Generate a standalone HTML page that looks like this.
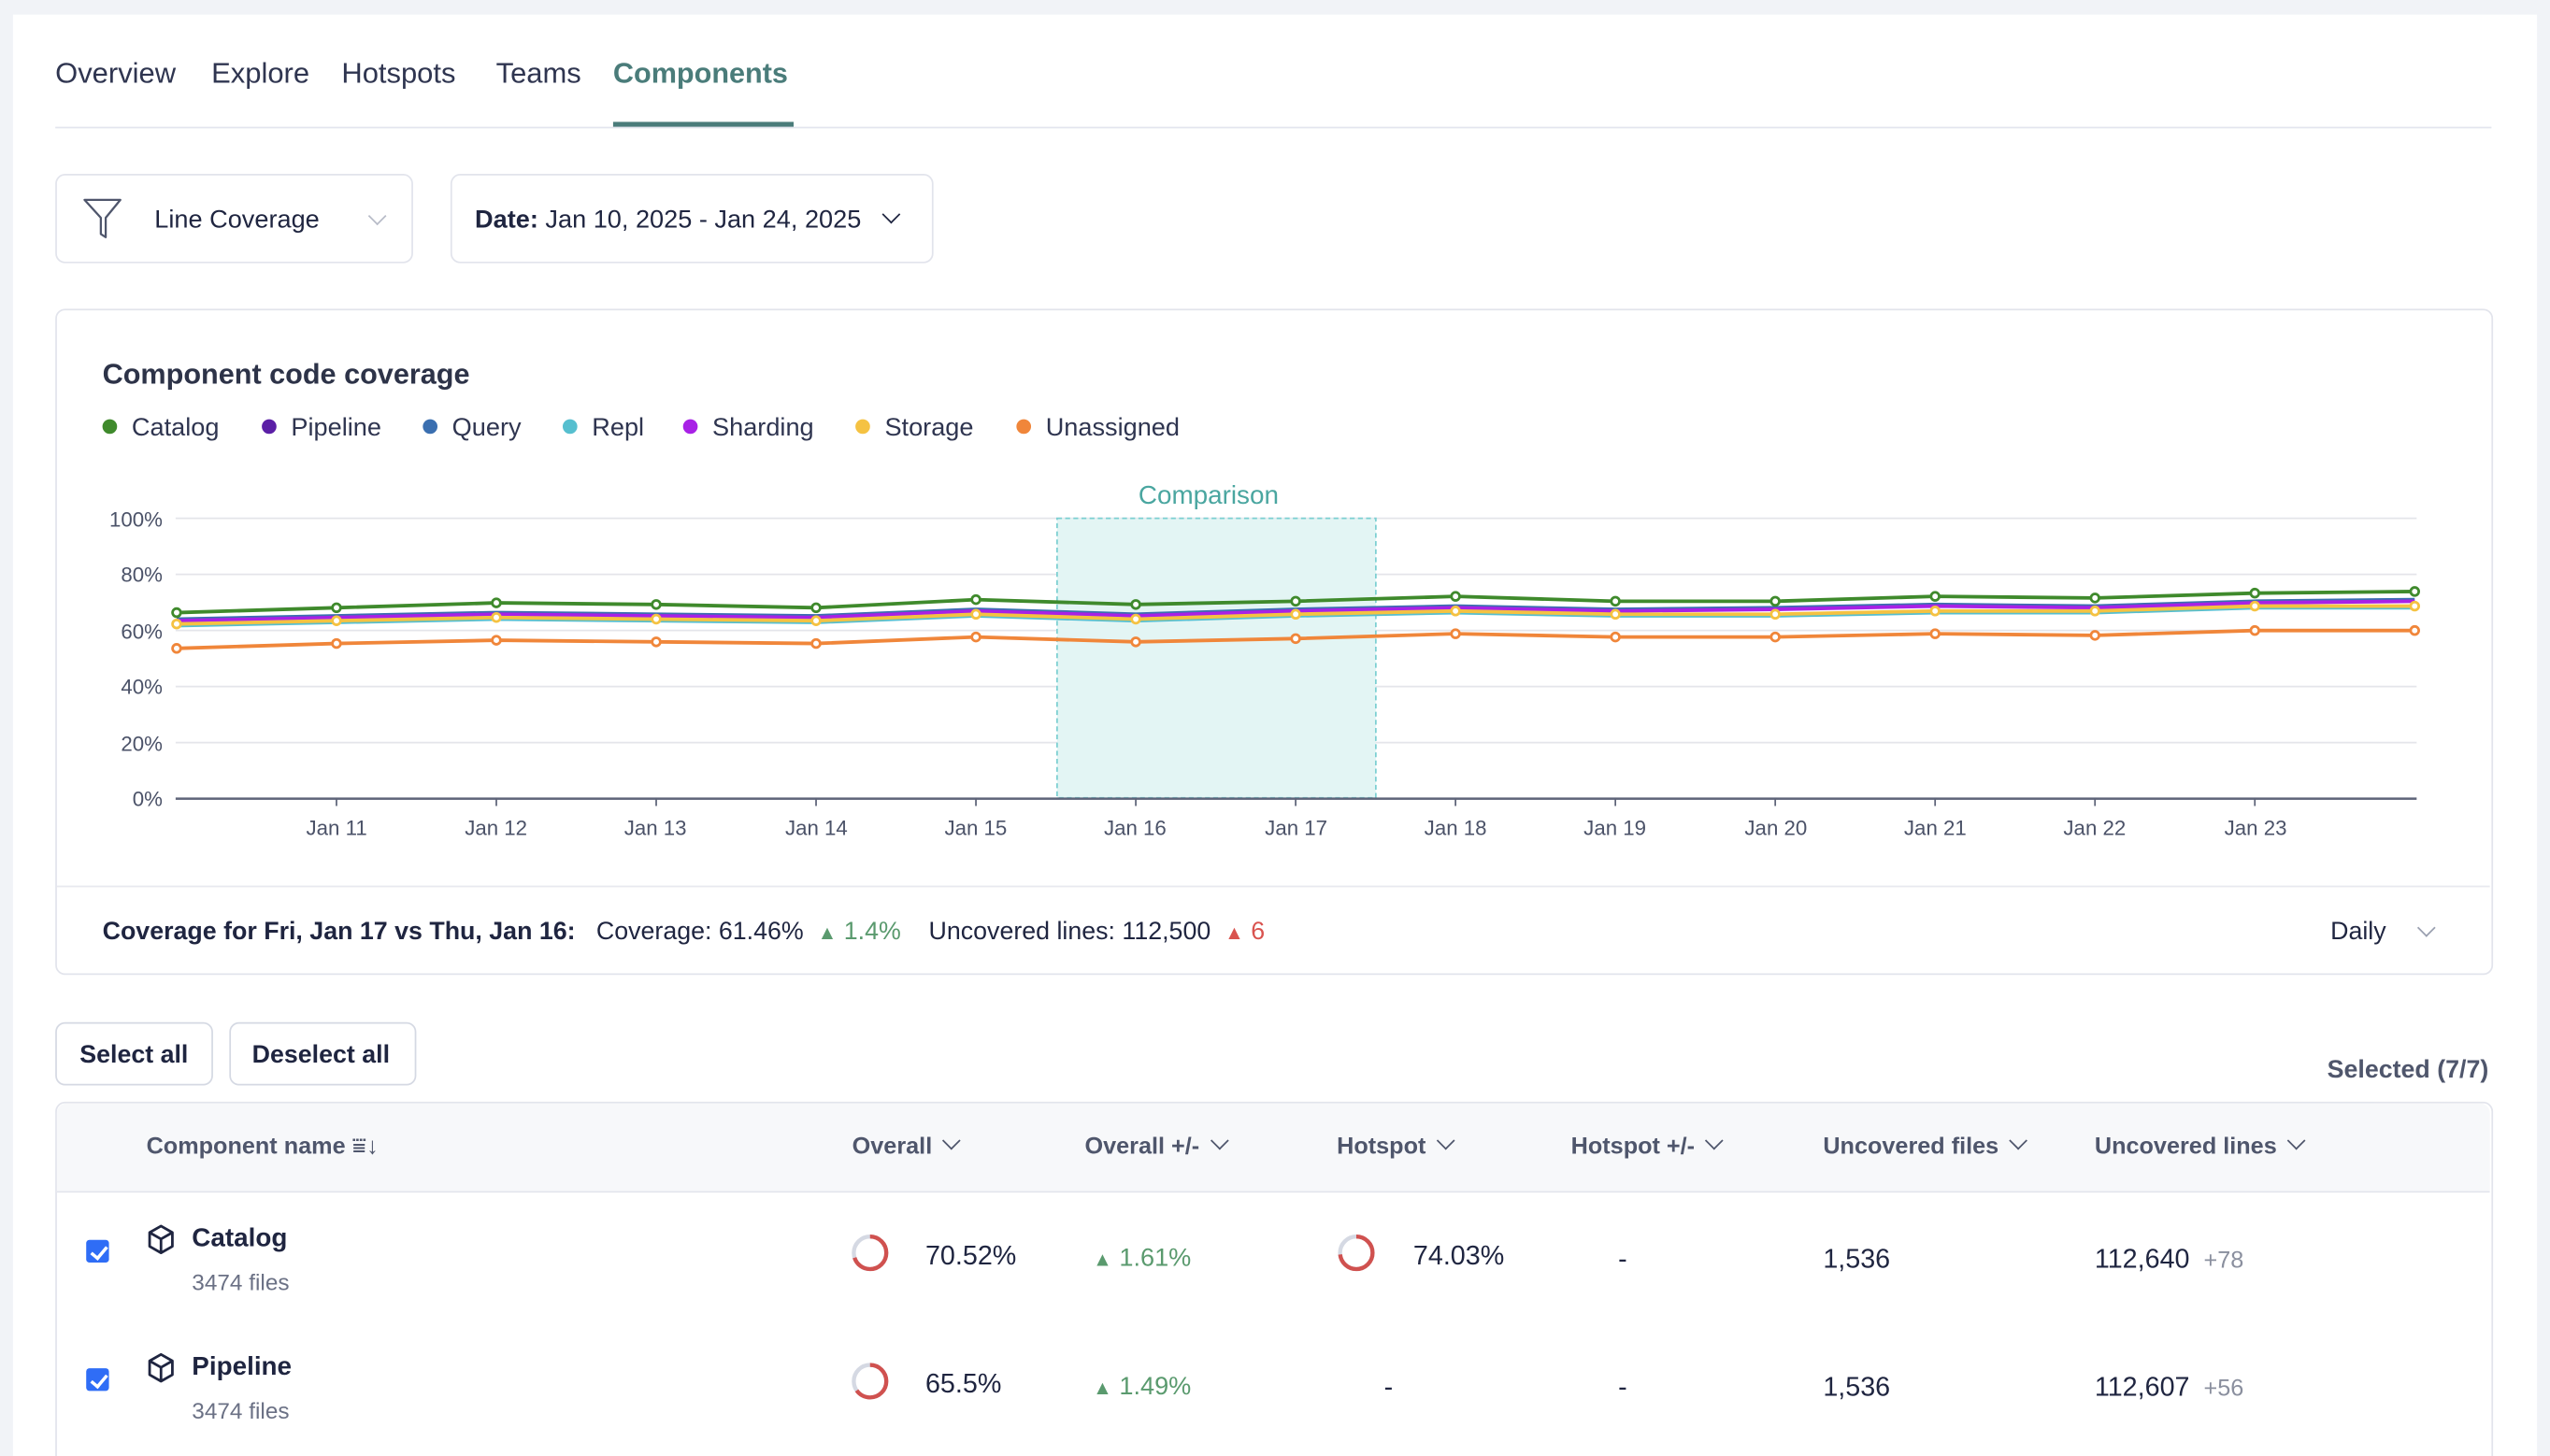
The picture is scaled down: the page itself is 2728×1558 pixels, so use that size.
<!DOCTYPE html>
<html><head><meta charset="utf-8"><style>
html,body{margin:0;padding:0;background:#f1f3f7;width:2728px;height:1558px;overflow:hidden}
#w{position:absolute;left:0;top:0;width:1568px;height:896px;overflow:hidden;transform:scale(1.7398,1.7388);transform-origin:0 0;font-family:"Liberation Sans",sans-serif;color:#1f2540}
.a{position:absolute;white-space:nowrap}
.panel{position:absolute;left:8px;top:9px;width:1552px;height:887px;background:#fff}
.tab{font-size:17.8px;color:#2f3550;top:34px}
.box{position:absolute;border:1px solid #e2e4ec;border-radius:6px;background:#fff}
.leg{font-size:15.6px;color:#2f3550;top:254px}
.dot{display:inline-block;width:9px;height:9px;border-radius:50%;margin-right:9px;vertical-align:1px}
.yl{font-size:12.8px;color:#4b5268;width:50px;text-align:right;left:50px}
.xl{font-size:12.8px;color:#4b5268;top:502px;width:60px;text-align:center}
.th{font-size:14.5px;color:#4f566c;top:698px;font-weight:bold}
.chev{display:inline-block;width:7px;height:7px;border-right:1.5px solid #4f566c;border-bottom:1.5px solid #4f566c;transform:rotate(45deg);margin-left:8px;vertical-align:4px}
.td{font-size:16.5px;color:#1f2540}
.cb{position:absolute;width:14px;height:14px;background:#2f6df6;border-radius:2px}
.cb:after{content:"";position:absolute;left:4.5px;top:1.5px;width:4px;height:8px;border-right:2px solid #fff;border-bottom:2px solid #fff;transform:rotate(40deg)}
.tri{font-size:12px}
</style></head><body><div id="w">
<div class="panel"></div>
<div class="a tab" style="left:34px;top:35px">Overview</div>
<div class="a tab" style="left:130px;top:35px">Explore</div>
<div class="a tab" style="left:210px;top:35px">Hotspots</div>
<div class="a tab" style="left:305px;top:35px">Teams</div>
<div class="a tab" style="left:377px;top:35px;color:#4a7c7a;font-weight:bold;font-size:17.6px">Components</div>
<div class="a" style="left:34px;top:78px;width:1498px;height:1px;background:#e3e5ee"></div>
<div class="a" style="left:377px;top:75px;width:111px;height:3px;background:#4a7c7a"></div>

<div class="box" style="left:34px;top:107px;width:218px;height:53px"></div>
<svg class="a" style="left:50px;top:121px" width="28" height="28" viewBox="0 0 28 28"><path d="M2 2 H24 L15 13 V25 L12 23 V13 Z" fill="none" stroke="#4f566c" stroke-width="1.3" stroke-linejoin="round"/></svg>
<div class="a" style="left:95px;top:127px;font-size:15.6px;color:#1f2540">Line Coverage</div>
<div class="a chev" style="left:220px;top:129px;border-color:#b8bcc8"></div>
<div class="box" style="left:277px;top:107px;width:295px;height:53px"></div>
<div class="a" style="left:292px;top:127px;font-size:15.6px;color:#1f2540"><b>Date:</b> Jan 10, 2025 - Jan 24, 2025</div>
<div class="a chev" style="left:536px;top:128px;border-color:#1f2540"></div>

<div class="box" style="left:34px;top:190px;width:1497px;height:408px"></div>
<div class="a" style="left:63px;top:220px;font-size:17.6px;font-weight:bold;color:#2d3348">Component code coverage</div>
<div class="a leg" style="left:63px;top:255px"><span class="dot" style="background:#3f8a2c"></span>Catalog</div>
<div class="a leg" style="left:161px;top:255px"><span class="dot" style="background:#5b1fa6"></span>Pipeline</div>
<div class="a leg" style="left:260px;top:255px"><span class="dot" style="background:#3a6fb0"></span>Query</div>
<div class="a leg" style="left:346px;top:255px"><span class="dot" style="background:#56bfcf"></span>Repl</div>
<div class="a leg" style="left:420px;top:255px"><span class="dot" style="background:#a821e6"></span>Sharding</div>
<div class="a leg" style="left:526px;top:255px"><span class="dot" style="background:#f5c242"></span>Storage</div>
<div class="a leg" style="left:625px;top:255px"><span class="dot" style="background:#f0863a"></span>Unassigned</div>

<div class="a yl" style="top:312px">100%</div>
<div class="a yl" style="top:346px">80%</div>
<div class="a yl" style="top:381px">60%</div>
<div class="a yl" style="top:415px">40%</div>
<div class="a yl" style="top:450px">20%</div>
<div class="a yl" style="top:484px">0%</div>
<div class="a" style="left:700px;top:297px;font-size:16px;color:#4aa6a0">Comparison</div>
<svg class="a" style="left:0;top:0" width="1568" height="540">
<g stroke="#e4e5ea" stroke-width="1"><line x1="108" y1="319" x2="1486" y2="319"/><line x1="108" y1="353.5" x2="1486" y2="353.5"/><line x1="108" y1="388" x2="1486" y2="388"/><line x1="108" y1="422.5" x2="1486" y2="422.5"/><line x1="108" y1="457" x2="1486" y2="457"/></g>
<rect x="650" y="319" width="196" height="172" fill="#e3f5f4" stroke="#7ccfd2" stroke-dasharray="3,2"/>
<line x1="108" y1="491.5" x2="1486" y2="491.5" stroke="#5d6378" stroke-width="1.5"/>
<g stroke="#5d6378"><line x1="206.9" y1="491" x2="206.9" y2="496"/><line x1="305.2" y1="491" x2="305.2" y2="496"/><line x1="403.5" y1="491" x2="403.5" y2="496"/><line x1="501.8" y1="491" x2="501.8" y2="496"/><line x1="600.1" y1="491" x2="600.1" y2="496"/><line x1="698.4" y1="491" x2="698.4" y2="496"/><line x1="796.7" y1="491" x2="796.7" y2="496"/><line x1="895" y1="491" x2="895" y2="496"/><line x1="993.3" y1="491" x2="993.3" y2="496"/><line x1="1091.6" y1="491" x2="1091.6" y2="496"/><line x1="1189.9" y1="491" x2="1189.9" y2="496"/><line x1="1288.2" y1="491" x2="1288.2" y2="496"/><line x1="1386.5" y1="491" x2="1386.5" y2="496"/></g>
<g fill="none" stroke-width="2.2" stroke-linejoin="round">
<polyline stroke="#56bfcf" points="108.6,385 206.9,383 305.2,381 403.5,382 501.8,383 600.1,379 698.4,382 796.7,379 895,377 993.3,379 1091.6,379 1189.9,377 1288.2,377 1386.5,374 1484.8,374"/>
<polyline stroke="#3a6fb0" points="108.6,381 206.9,379 305.2,377 403.5,378 501.8,379 600.1,375 698.4,378 796.7,375 895,373 993.3,375 1091.6,374 1189.9,372 1288.2,373 1386.5,370 1484.8,369"/>
<polyline stroke="#a821e6" points="108.6,382 206.9,380 305.2,378 403.5,379 501.8,380 600.1,376 698.4,379 796.7,376 895,374 993.3,376 1091.6,375 1189.9,373 1288.2,374 1386.5,371 1484.8,370"/>
<polyline stroke="#f5c242" points="108.6,384 206.9,382 305.2,380 403.5,381 501.8,382 600.1,378 698.4,381 796.7,378 895,376 993.3,378 1091.6,378 1189.9,376 1288.2,376 1386.5,373 1484.8,373"/>
<polyline stroke="#3f8a2c" points="108.6,377 206.9,374 305.2,371 403.5,372 501.8,374 600.1,369 698.4,372 796.7,370 895,367 993.3,370 1091.6,370 1189.9,367 1288.2,368 1386.5,365 1484.8,364"/>
<polyline stroke="#f0863a" points="108.6,399 206.9,396 305.2,394 403.5,395 501.8,396 600.1,392 698.4,395 796.7,393 895,390 993.3,392 1091.6,392 1189.9,390 1288.2,391 1386.5,388 1484.8,388"/>
</g>
<g fill="#fff" stroke-width="1.6">
<g stroke="#f5c242"><circle cx="108.6" cy="384" r="2.5"/><circle cx="206.9" cy="382" r="2.5"/><circle cx="305.2" cy="380" r="2.5"/><circle cx="403.5" cy="381" r="2.5"/><circle cx="501.8" cy="382" r="2.5"/><circle cx="600.1" cy="378" r="2.5"/><circle cx="698.4" cy="381" r="2.5"/><circle cx="796.7" cy="378" r="2.5"/><circle cx="895" cy="376" r="2.5"/><circle cx="993.3" cy="378" r="2.5"/><circle cx="1091.6" cy="378" r="2.5"/><circle cx="1189.9" cy="376" r="2.5"/><circle cx="1288.2" cy="376" r="2.5"/><circle cx="1386.5" cy="373" r="2.5"/><circle cx="1484.8" cy="373" r="2.5"/></g>
<g stroke="#3f8a2c"><circle cx="108.6" cy="377" r="2.5"/><circle cx="206.9" cy="374" r="2.5"/><circle cx="305.2" cy="371" r="2.5"/><circle cx="403.5" cy="372" r="2.5"/><circle cx="501.8" cy="374" r="2.5"/><circle cx="600.1" cy="369" r="2.5"/><circle cx="698.4" cy="372" r="2.5"/><circle cx="796.7" cy="370" r="2.5"/><circle cx="895" cy="367" r="2.5"/><circle cx="993.3" cy="370" r="2.5"/><circle cx="1091.6" cy="370" r="2.5"/><circle cx="1189.9" cy="367" r="2.5"/><circle cx="1288.2" cy="368" r="2.5"/><circle cx="1386.5" cy="365" r="2.5"/><circle cx="1484.8" cy="364" r="2.5"/></g>
<g stroke="#f0863a"><circle cx="108.6" cy="399" r="2.5"/><circle cx="206.9" cy="396" r="2.5"/><circle cx="305.2" cy="394" r="2.5"/><circle cx="403.5" cy="395" r="2.5"/><circle cx="501.8" cy="396" r="2.5"/><circle cx="600.1" cy="392" r="2.5"/><circle cx="698.4" cy="395" r="2.5"/><circle cx="796.7" cy="393" r="2.5"/><circle cx="895" cy="390" r="2.5"/><circle cx="993.3" cy="392" r="2.5"/><circle cx="1091.6" cy="392" r="2.5"/><circle cx="1189.9" cy="390" r="2.5"/><circle cx="1288.2" cy="391" r="2.5"/><circle cx="1386.5" cy="388" r="2.5"/><circle cx="1484.8" cy="388" r="2.5"/></g>
</g>
</svg>
<div class="a xl" style="left:177px">Jan 11</div><div class="a xl" style="left:275px">Jan 12</div><div class="a xl" style="left:373px">Jan 13</div><div class="a xl" style="left:472px">Jan 14</div><div class="a xl" style="left:570px">Jan 15</div><div class="a xl" style="left:668px">Jan 16</div><div class="a xl" style="left:767px">Jan 17</div><div class="a xl" style="left:865px">Jan 18</div><div class="a xl" style="left:963px">Jan 19</div><div class="a xl" style="left:1062px">Jan 20</div><div class="a xl" style="left:1160px">Jan 21</div><div class="a xl" style="left:1258px">Jan 22</div><div class="a xl" style="left:1357px">Jan 23</div>

<div class="a" style="left:35px;top:545px;width:1496px;height:1px;background:#e8e9ef"></div>
<div class="a" style="left:63px;top:565px;font-size:15.4px;color:#1f2540"><b>Coverage for Fri, Jan 17 vs Thu, Jan 16:</b>&nbsp;&nbsp; Coverage: 61.46% &nbsp;<span class="tri" style="color:#5a9a6e">▲</span> <span style="color:#5a9a6e">1.4%</span>&nbsp;&nbsp;&nbsp; Uncovered lines: 112,500 &nbsp;<span class="tri" style="color:#d9534f">▲</span> <span style="color:#d9534f">6</span></div>
<div class="a" style="left:1433px;top:565px;font-size:15.4px;color:#1f2540">Daily</div>
<div class="a chev" style="left:1480px;top:567px;border-color:#9aa0b0"></div>

<div class="box" style="left:34px;top:629px;width:95px;height:37px;border-color:#d5d9e3"></div>
<div class="a" style="left:49px;top:641px;font-size:15.4px;font-weight:bold">Select all</div>
<div class="box" style="left:141px;top:629px;width:113px;height:37px;border-color:#d5d9e3"></div>
<div class="a" style="left:155px;top:641px;font-size:15.4px;font-weight:bold">Deselect all</div>
<div class="a" style="left:1431px;top:650px;font-size:15.4px;font-weight:bold;color:#4f566c">Selected (7/7)</div>

<div class="a" style="left:34px;top:678px;width:1497px;height:230px;border:1px solid #e2e4ec;border-radius:6px 6px 0 0;background:#fff"></div>
<div class="a" style="left:35px;top:679px;width:1496px;height:54px;background:#f7f8fa;border-bottom:1px solid #e2e4ec;border-radius:6px 6px 0 0"></div>
<div class="a th" style="left:90px">Component name <span style="font-weight:normal">⩸↓</span></div>
<div class="a th" style="left:524px">Overall<span class="chev"></span></div>
<div class="a th" style="left:667px">Overall +/-<span class="chev"></span></div>
<div class="a th" style="left:822px">Hotspot<span class="chev"></span></div>
<div class="a th" style="left:966px">Hotspot +/-<span class="chev"></span></div>
<div class="a th" style="left:1121px">Uncovered files<span class="chev"></span></div>
<div class="a th" style="left:1288px">Uncovered lines<span class="chev"></span></div>

<div class="cb" style="left:53px;top:763px"></div>
<svg class="a" style="left:90px;top:753px" width="18" height="20" viewBox="0 0 18 20"><path d="M9 1.5 L16 5.5 V14 L9 18 L2 14 V5.5 Z M2 5.5 L9 9.5 L16 5.5 M9 9.5 V18" fill="none" stroke="#1f2540" stroke-width="1.6" stroke-linejoin="round"/></svg>
<div class="a" style="left:118px;top:754px;font-size:16px;font-weight:bold">Catalog</div>
<div class="a" style="left:118px;top:781px;font-size:14px;color:#6b7185">3474 files</div>
<svg class="a" style="left:523px;top:759px" width="24" height="24"><circle cx="12" cy="12" r="10" fill="none" stroke="#d5d9e3" stroke-width="2.5"/><circle cx="12" cy="12" r="10" fill="none" stroke="#d0514f" stroke-width="2.5" stroke-dasharray="44 62.8" transform="rotate(-90 12 12)"/></svg>
<div class="a td" style="left:569px;top:764px">70.52%</div>
<div class="a" style="left:672px;top:766px;font-size:15.6px;color:#5a9a6e"><span class="tri">▲</span> 1.61%</div>
<svg class="a" style="left:822px;top:759px" width="24" height="24"><circle cx="12" cy="12" r="10" fill="none" stroke="#d5d9e3" stroke-width="2.5"/><circle cx="12" cy="12" r="10" fill="none" stroke="#d0514f" stroke-width="2.5" stroke-dasharray="46 62.8" transform="rotate(-90 12 12)"/></svg>
<div class="a td" style="left:869px;top:764px">74.03%</div>
<div class="a td" style="left:995px;top:766px">-</div>
<div class="a td" style="left:1121px;top:766px">1,536</div>
<div class="a td" style="left:1288px;top:766px">112,640 <span style="font-size:14.5px;color:#8a8f9e">&nbsp;+78</span></div>

<div class="cb" style="left:53px;top:842px"></div>
<svg class="a" style="left:90px;top:832px" width="18" height="20" viewBox="0 0 18 20"><path d="M9 1.5 L16 5.5 V14 L9 18 L2 14 V5.5 Z M2 5.5 L9 9.5 L16 5.5 M9 9.5 V18" fill="none" stroke="#1f2540" stroke-width="1.6" stroke-linejoin="round"/></svg>
<div class="a" style="left:118px;top:833px;font-size:16px;font-weight:bold">Pipeline</div>
<div class="a" style="left:118px;top:860px;font-size:14px;color:#6b7185">3474 files</div>
<svg class="a" style="left:523px;top:838px" width="24" height="24"><circle cx="12" cy="12" r="10" fill="none" stroke="#d5d9e3" stroke-width="2.5"/><circle cx="12" cy="12" r="10" fill="none" stroke="#d0514f" stroke-width="2.5" stroke-dasharray="41 62.8" transform="rotate(-90 12 12)"/></svg>
<div class="a td" style="left:569px;top:843px">65.5%</div>
<div class="a" style="left:672px;top:845px;font-size:15.6px;color:#5a9a6e"><span class="tri">▲</span> 1.49%</div>
<div class="a td" style="left:851px;top:845px">-</div>
<div class="a td" style="left:995px;top:845px">-</div>
<div class="a td" style="left:1121px;top:845px">1,536</div>
<div class="a td" style="left:1288px;top:845px">112,607 <span style="font-size:14.5px;color:#8a8f9e">&nbsp;+56</span></div>
</div></body></html>
